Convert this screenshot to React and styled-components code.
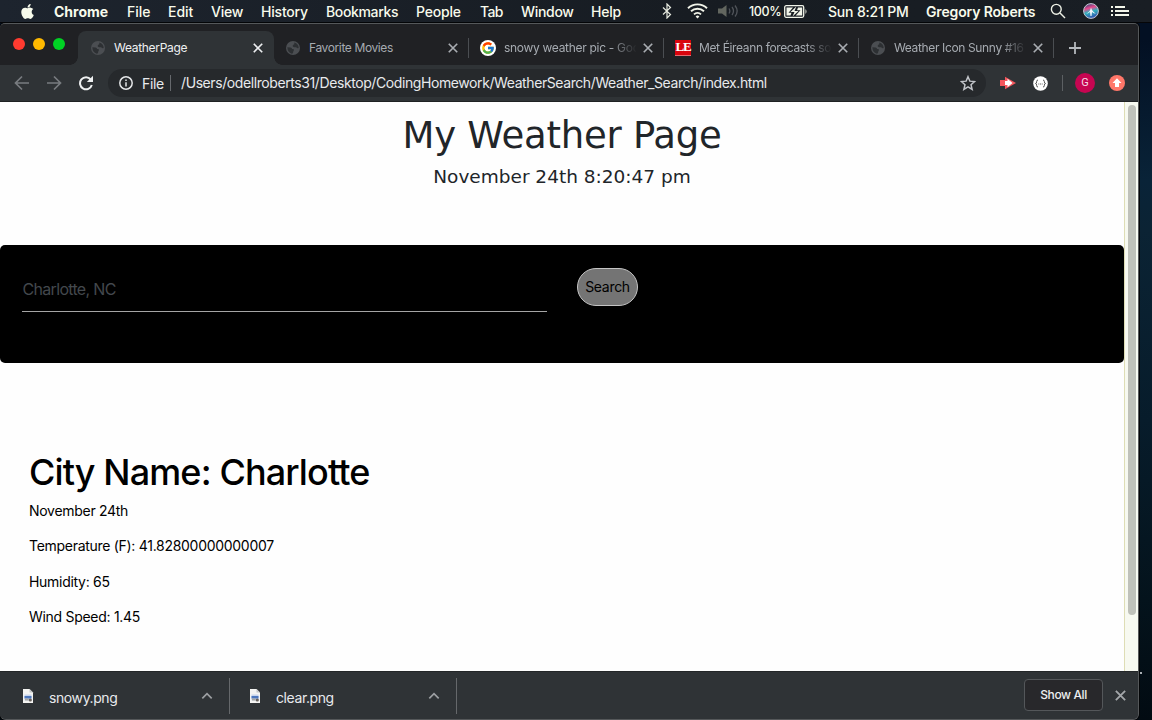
import React from "react";
import styled, { createGlobalStyle } from "styled-components";
import { FaApple } from "react-icons/fa";
import { FcGoogle } from "react-icons/fc";

const Global = createGlobalStyle`
  * { box-sizing: border-box; }
  html, body { margin: 0; overflow: hidden; }
  body { font-family: Inter, "Liberation Sans", sans-serif; }
  h1, p { margin: 0; font-weight: 400; }
  svg { display: block; }
`;

const Desktop = styled.div`
  position: relative;
  width: 1152px;
  height: 720px;
  display: flex;
  flex-direction: column;
  background: linear-gradient(#031023 0, #031023 40px, #092338 180px, #0b2334 230px, #071c2b 420px, #04131c 600px, #020b12 720px);
`;

const Speck = styled.i`
  position: absolute;
  left: 1140px;
  top: 672px;
  width: 2px;
  height: 2px;
  background: #a9b0b5;
`;

const MenuBar = styled.header`
  flex: 0 0 23px;
  display: flex;
  align-items: center;
  padding-left: 19px;
  background: linear-gradient(90deg, #1d242e, #171c22 60%, #191e24);
  border-bottom: 1px solid #050608;
  color: #f8fbec;
  font-size: 14px;
  font-weight: 500;
`;

const Slot = styled.span`
  flex: 0 0 ${(p) => p.$w}px;
  display: flex;
  align-items: center;
  white-space: nowrap;
  font-weight: ${(p) => p.$weight || 500};
  font-size: ${(p) => p.$size || 14}px;
  letter-spacing: ${(p) => p.$ls || 0}px;
`;

const Browser = styled.main`
  width: 1139px;
  flex: 0 0 697px;
  display: flex;
  flex-direction: column;
  overflow: hidden;
  background: #2f3336;
  border: solid #55585a;
  border-width: 1px 1px 1px 0;
  border-radius: 5px 5px 6px 6px;
  box-shadow: 0 0 0 1px #030507;
`;

const TabStrip = styled.div`
  flex: 0 0 41px;
  display: flex;
  align-items: flex-end;
  background: #202124;
`;

const Lights = styled.div`
  width: 78px;
  height: 41px;
  padding: 14px 0 0 13px;
  display: flex;
  gap: 8px;
`;

const Light = styled.i`
  width: 12px;
  height: 12px;
  border-radius: 50%;
  background: ${(p) => p.$color};
`;

const Tab = styled.div`
  position: relative;
  width: ${(p) => (p.$active ? 196 : 195)}px;
  margin-right: ${(p) => (p.$active ? -1 : 0)}px;
  height: 34px;
  display: flex;
  align-items: center;
  padding-left: 12px;
  border-radius: 8px 8px 0 0;
  background: ${(p) => (p.$active ? "#2f3336" : "transparent")};
  color: ${(p) => (p.$active ? "#eef0f1" : "#a6abb1")};
  &::before, &::after {
    content: ${(p) => (p.$active ? '""' : "none")};
    position: absolute;
    bottom: 0;
    width: 8px;
    height: 8px;
  }
  &::before { left: -8px; background: radial-gradient(circle at 0 0, transparent 7.5px, #2f3336 8px); }
  &::after { right: -8px; background: radial-gradient(circle at 100% 0, transparent 7.5px, #2f3336 8px); }
`;

const Favicon = styled.span`
  width: 24px;
  flex: none;
`;

const TabTitle = styled.span`
  width: 132px;
  flex: none;
  white-space: nowrap;
  font-size: 12px;
  line-height: 18px;
  padding-bottom: 1px;
  letter-spacing: ${(p) => p.$ls || 0}px;
  mask-image: ${(p) => (p.$fade ? "linear-gradient(90deg, #000 106px, transparent 133px)" : "none")};
`;

const Close = styled.span`
  width: 23px;
  flex: none;
  display: flex;
  justify-content: center;
`;

const Divider = styled.i`
  flex: none;
  width: 1px;
  height: ${(p) => p.$h}px;
  background: ${(p) => p.$color || "#4b4e52"};
  margin-left: ${(p) => p.$ml || 0}px;
`;

const NewTab = styled.span`
  margin: 0 0 11px 16px;
`;

const Toolbar = styled.div`
  flex: 0 0 37px;
  display: flex;
  align-items: center;
  border-bottom: 1px solid #1f2123;
  padding-left: 14px;
`;

const NavButton = styled.span`
  width: 32px;
`;

const Omnibox = styled.div`
  width: 878px;
  height: 28px;
  margin-left: -2px;
  padding-left: 11px;
  border-radius: 14px;
  display: flex;
  align-items: center;
  background: #26292c;
  color: #e8eaed;
  font-size: 14px;
`;

const UrlText = styled.span`
  padding: 0 0 1px 10px;
`;

const Extension = styled.span`
  width: ${(p) => p.$w}px;
  margin-left: ${(p) => p.$ml || 0}px;
`;

const Avatar = styled.span`
  width: 20px;
  height: 20px;
  border-radius: 50%;
  margin: 0 14px 0 12px;
  background: #c60551;
  color: #f6dbe6;
  font: 11px/20px Roboto, sans-serif;
  text-align: center;
`;

const Viewport = styled.div`
  flex: 0 0 569px;
  display: flex;
  background: #fefefe;
`;

const Page = styled.div`
  width: 1124px;
`;

const Heading = styled.h1`
  height: 60px;
  padding-top: 10px;
  text-align: center;
  font: 37px/48px "DejaVu Sans", sans-serif;
  letter-spacing: -0.25px;
  color: #212529;
`;

const Clock = styled.p`
  height: 83px;
  padding-top: 1px;
  text-align: center;
  font: 18.5px/28px "DejaVu Sans", sans-serif;
  color: #212529;
`;

const SearchPanel = styled.section`
  height: 118px;
  display: flex;
  align-items: flex-start;
  padding: 23px 0 0 22px;
  gap: 30px;
  background: #000;
  border-radius: 5px;
`;

const CityInput = styled.div`
  width: 525px;
  height: 44px;
  padding-left: 0.5px;
  border-bottom: 1px solid #a5a5a5;
  color: #43484d;
  font-size: 16px;
  line-height: 43px;
  letter-spacing: -0.68px;
`;

const SearchButton = styled.button`
  width: 61px;
  height: 38px;
  padding: 0 0 2px;
  border: 1px solid #c4c4c4;
  border-radius: 19px;
  background: #747474;
  color: #000;
  font: 14px Inter, sans-serif;
  letter-spacing: -0.3px;
`;

const Report = styled.section`
  padding: 87px 0 0 29px;
  color: #000;
`;

const City = styled.h1`
  font-size: 36px;
  font-weight: 540;
  line-height: 44px;
  letter-spacing: -0.88px;
  font-variant-ligatures: none;
`;

const Reading = styled.p`
  height: 35.4px;
  font-size: 14px;
  line-height: 34px;
  letter-spacing: -0.29px;
`;

const Scrollbar = styled.div`
  width: 14px;
  border-left: 1px solid #deddb5;
  background: #f7f9f0;
  padding: 3px 0 0 3px;
`;

const Thumb = styled.div`
  width: 8px;
  height: 510px;
  border-radius: 4px;
  background: #bfc1b9;
`;

const Downloads = styled.footer`
  flex: 1;
  display: flex;
  align-items: center;
  border-top: 1px solid #232628;
  background: #2f3336;
`;

const Download = styled.div`
  width: ${(p) => p.$w}px;
  height: 36px;
  display: flex;
  align-items: center;
  padding-left: ${(p) => p.$pl}px;
  border-right: 1px solid #65686b;
  color: #e8eaed;
  font-size: 14px;
`;

const FileName = styled.span`
  width: 152px;
  margin-left: 14px;
  padding-top: 3px;
  letter-spacing: -0.4px;
`;

const ShowAll = styled.button`
  width: 79px;
  height: 32px;
  margin: 0 0 2px 567px;
  padding: 0;
  border: 1px solid #54575a;
  border-radius: 4px;
  background: #28282b;
  color: #eeeff0;
  font: 500 12px Inter, sans-serif;
  letter-spacing: -0.4px;
`;

const Globe = () => (
  <svg width="16" height="16" viewBox="0 0 16 16">
    <circle cx="8" cy="8" r="7" fill="#4b4e52" />
    <path
      d="M2.300 7.300l3.200.2q1.500.2 1.600 1.500l1.700.3q.6 1-.4 1.700l-.5 2.300-1.200.5Q2.600 12.500 2.300 7.300zM9.300 2.500Q13.500 3.500 13.700 8q-1.500.5-2.500-.8-1.500.4-2.700-.2-1.300-.7-.6-2l1.400-.7z"
      fill="#2d3033"
    />
  </svg>
);

const GoogleIcon = styled(FcGoogle).attrs({ size: 16 })`
  padding: 1px;
  border-radius: 50%;
  background: #fff;
`;

const Cross = ({ color = "#b5b8bc", size = 9, w = 1.6 }) => (
  <svg width={size} height={size} viewBox="0 0 9 9" stroke={color} strokeWidth={w}>
    <path d="M.7.7l7.600 7.600M8.300.7L.7 8.300" />
  </svg>
);

const LeLogo = styled.span`
  display: block;
  width: 16px;
  height: 16px;
  background: #d9040d;
  border-bottom: 1px solid #e56a70;
  color: #fff;
  font: bold 13px/14px "Liberation Serif", serif;
  text-align: center;
  letter-spacing: -1.2px;
`;

const FileIcon = () => (
  <svg width="13" height="16" viewBox="0 0 13 16">
    <path d="M1 1h6.500L11 4.500V15H1z" fill="#f4f4f2" />
    <path d="M7.500 1v3.500H11z" fill="#c3c5c6" />
    <path d="M2.500 6.500h7v6h-7z" fill="#c9d5ec" />
    <path d="M2.500 8h7v2.500h-7z" fill="#4c77bd" />
    <path d="M3 10.500h3.500v2H3z" fill="#a8a7a2" />
    <circle cx="8.300" cy="12" r="1.600" fill="#67605a" />
  </svg>
);

const Chevron = () => (
  <svg width="12" height="8" viewBox="0 0 12 8" fill="none" stroke="#9c9fa2" strokeWidth="1.700">
    <path d="M1.300 6.300L6 1.700l4.700 4.600" />
  </svg>
);

const tabs = [
  { title: "WeatherPage", icon: <Globe />, active: true, ls: -0.3 },
  { title: "Favorite Movies", icon: <Globe />, ls: -0.38 },
  { title: "snowy weather pic - Goo", icon: <GoogleIcon />, fade: true, ls: -0.3 },
  { title: "Met Éireann forecasts so", icon: <LeLogo>LE</LeLogo>, fade: true, ls: -0.36 },
  { title: "Weather Icon Sunny #16", icon: <Globe />, fade: true, ls: -0.36 },
];

const menus = [
  ["Chrome", 73, 700, 0],
  ["File", 41], ["Edit", 43], ["View", 50, 500, -0.2], ["History", 65, 500, -0.2],
  ["Bookmarks", 90, 500, -0.35], ["People", 64, 500, -0.2], ["Tab", 41, 500, -0.6],
  ["Window", 70, 500, -0.3], ["Help", 70, 500, -0.2],
];

export default function App() {
  return (
    <Desktop>
      <Global />
      <MenuBar>
        <Slot $w={35}><FaApple size={17} /></Slot>
        {menus.map(([label, w, weight, ls]) => (
          <Slot key={label} $w={w} $weight={weight} $ls={ls}>{label}</Slot>
        ))}
        <Slot $w={26}>
          <svg width="12" height="16" viewBox="0 0 12 16" fill="none" stroke="#e6e9df" strokeWidth="1.200">
            <path d="M2 4.500l7.500 7L6 15V1l3.500 3.500L2 11.500" />
          </svg>
        </Slot>
        <Slot $w={31}>
          <svg width="21" height="16" viewBox="0 0 21 16" fill="none" stroke="#f1f4e9" strokeWidth="1.900">
            <path d="M1 5.200a13.700 13.700 0 0 1 19 0M4 8.300a9.500 9.500 0 0 1 13 0M7 11.400a5.200 5.200 0 0 1 7 0" />
            <path d="M8.600 13.400a3 3 0 0 1 3.800 0L10.500 15.500z" fill="#f1f4e9" stroke="none" />
          </svg>
        </Slot>
        <Slot $w={31}>
          <svg width="21" height="14" viewBox="0 0 21 14" fill="none" stroke="#50545a" strokeWidth="1.300">
            <path d="M0 4.500h4L8.500 1v12L4 9.500H0z" fill="#62665f" stroke="none" />
            <path d="M11 4.500q1.700 2.500 0 5M14 3q3 4 0 8M17 1.500q4.300 5.500 0 11" />
          </svg>
        </Slot>
        <Slot $w={35} $size={12.500} $ls={-0.35}>100%</Slot>
        <Slot $w={44}>
          <svg width="24" height="13" viewBox="0 0 24 13">
            <rect x=".7" y=".7" width="19" height="11.600" rx="1.500" fill="none" stroke="#f1f4e9" strokeWidth="1.300" />
            <path d="M2.500 2.500H9L4.500 7.800H7.500L6.500 10.500H2.500zM14 2.500h4.200v8h-6.500L16.500 5.200h-3.500z" fill="#f1f4e9" />
            <path d="M12.300 1.500L6.500 7h4L8.500 11.500 14.500 6h-4z" fill="#f1f4e9" />
            <path d="M21.500 4v5q2-2.500 0-5" fill="#f1f4e9" />
          </svg>
        </Slot>
        <Slot $w={98} $ls={-0.18}>Sun 8:21 PM</Slot>
        <Slot $w={124} $weight={600} $ls={-0.15}>Gregory Roberts</Slot>
        <Slot $w={33}>
          <svg width="16" height="16" viewBox="0 0 16 16" fill="none" stroke="#edf0e5" strokeWidth="1.400">
            <circle cx="6.300" cy="6.300" r="4.900" /><path d="M10 10l5 5" />
          </svg>
        </Slot>
        <Slot $w={28}>
          <svg width="16" height="16" viewBox="0 0 16 16">
            <defs>
              <linearGradient id="orb" x1=".3" y1="0" x2=".6" y2="1">
                <stop offset="0" stopColor="#384078" /><stop offset=".3" stopColor="#e8488c" />
                <stop offset=".55" stopColor="#2fb3bd" /><stop offset="1" stopColor="#3148b0" />
              </linearGradient>
            </defs>
            <circle cx="8" cy="8" r="7.400" fill="url(#orb)" stroke="#c4c9d3" strokeWidth="1" />
            <path d="M3 10.500q4-1 5-6 1 4 5 6-2.500 0-4-1.500L8.500 13h-1L7 9q-2 1.500-4 1.500z" fill="#f4f5fc" />
          </svg>
        </Slot>
        <svg width="18" height="12" viewBox="0 0 18 12" fill="#f4f7eb">
          <path d="M0 1h2v2H0zM0 5h2v2H0zM0 9h2v2H0zM4 1H14v2H4zM4 5H18v2H4zM4 9H18v2H4z" />
        </svg>
      </MenuBar>

      <Browser>
        <TabStrip>
          <Lights><Light $color="#ff3b30" /><Light $color="#ffb900" /><Light $color="#00d224" /></Lights>
          {tabs.map((t) => (
            <Tab key={t.title} $active={t.active}>
              <Favicon>{t.icon}</Favicon>
              <TabTitle $fade={t.fade} $ls={t.ls}>{t.title}</TabTitle>
              <Close><Cross size={10} w={1.500} color={t.active ? "#edeff1" : "#a9adb2"} /></Close>
              {!t.active && <Divider $h={20} $ml={4} />}
            </Tab>
          ))}
          <NewTab>
            <svg width="12" height="12" viewBox="0 0 12 12" stroke="#b4b8bd" strokeWidth="1.800"><path d="M6 0v12M0 6h12" /></svg>
          </NewTab>
        </TabStrip>

        <Toolbar>
          <NavButton>
            <svg width="16" height="16" viewBox="0 0 16 16" fill="none" stroke="#787c80" strokeWidth="1.700"><path d="M15 8H2M8 1.500L1.500 8 8 14.500" /></svg>
          </NavButton>
          <NavButton>
            <svg width="16" height="16" viewBox="0 0 16 16" fill="none" stroke="#787c80" strokeWidth="1.700"><path d="M1 8h13M8 1.500L14.500 8 8 14.500" /></svg>
          </NavButton>
          <NavButton>
            <svg width="16" height="16" viewBox="0 0 16 16" fill="none" stroke="#eff1f2" strokeWidth="2"><path d="M12.700 4.500A6 6 0 1 0 13.800 10" /><path d="M15 .8v6.200H8.800z" fill="#eff1f2" stroke="none" /></svg>
          </NavButton>
          <Omnibox>
            <Slot $w={23}>
              <svg width="14" height="14" viewBox="0 0 14 14" fill="none" stroke="#e5e7e9" strokeWidth="1.500"><circle cx="7" cy="7" r="6.200" /><path d="M7 6.200v4.300M7 3.400v1.600" /></svg>
            </Slot>
            <Slot $w={28} $weight={400} $ls={-0.35}>File</Slot>
            <Divider $h={16} $color="#66696d" />
            <Slot $w={789} $weight={400} $ls={-0.41}>
              <UrlText>/Users/odellroberts31/Desktop/CodingHomework/WeatherSearch/Weather_Search/index.html</UrlText>
            </Slot>
            <svg width="16" height="16" viewBox="0 0 24 24" fill="none" stroke="#c1c4c9" strokeWidth="2.200"><path d="M12 2.500l2.800 6.700 7.200.6-5.500 4.700 1.700 7L12 17.700l-6.200 3.800 1.700-7L2 9.800l7.200-.6z" /></svg>
          </Omnibox>
          <Extension $ml={14} $w={33}>
            <svg width="16" height="14" viewBox="0 0 16 14"><path d="M0 4h5V.8L16 7 5 13.200V10H0z" fill="#f4565c" /><path d="M5 5h2.500v-2.200L12.500 7l-5 4.200V9H5z" fill="#fff" /></svg>
          </Extension>
          <Extension $w={29}>
            <svg width="15" height="15" viewBox="0 0 15 15">
              <circle cx="7.500" cy="7.500" r="7.300" fill="#fff" />
              <path d="M5 4q-1.500.2-1.400 1.700Q3.700 7.500 2.500 7.500q1.200 0 1.100 1.800Q3.500 11 5 11M10 4q1.500.2 1.400 1.700 0 1.800 1.100 1.800-1.200 0-1.100 1.800Q11.500 11 10 11" fill="none" stroke="#555" strokeWidth="1" />
              <path d="M5.300 8h1M7 8h1M8.700 8h1" stroke="#666" strokeWidth="1" />
            </svg>
          </Extension>
          <Divider $h={16} $color="#5c6063" />
          <Avatar>G</Avatar>
          <svg width="16" height="16" viewBox="0 0 16 16"><circle cx="8" cy="8" r="8" fill="#ff7769" /><path d="M8 3.300L12.500 8H10v4H6V8H3.500z" fill="#fff" /></svg>
        </Toolbar>

        <Viewport>
          <Page>
            <Heading>My Weather Page</Heading>
            <Clock>November 24th 8:20:47 pm</Clock>
            <SearchPanel>
              <CityInput>Charlotte, NC</CityInput>
              <SearchButton>Search</SearchButton>
            </SearchPanel>
            <Report>
              <City>City Name: Charlotte</City>
              <Reading>November 24th</Reading>
              <Reading>Temperature (F): 41.82800000000007</Reading>
              <Reading>Humidity: 65</Reading>
              <Reading>Wind Speed: 1.45</Reading>
            </Report>
          </Page>
          <Scrollbar><Thumb /></Scrollbar>
        </Viewport>

        <Downloads>
          <Download $w={230} $pl={22}><FileIcon /><FileName>snowy.png</FileName><Chevron /></Download>
          <Download $w={227} $pl={19}><FileIcon /><FileName>clear.png</FileName><Chevron /></Download>
          <ShowAll>Show All</ShowAll>
          <Extension $ml={12} $w={12}><Cross size={11} w={1.500} color="#a4a7aa" /></Extension>
        </Downloads>
      </Browser>
      <Speck />
    </Desktop>
  );
}
